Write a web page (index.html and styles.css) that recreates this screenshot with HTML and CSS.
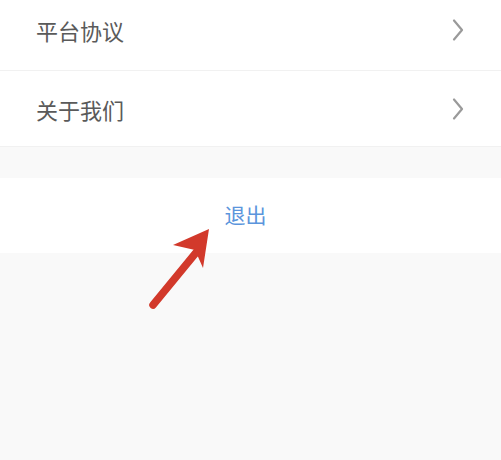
FILE: index.html
```html
<!DOCTYPE html>
<html lang="zh-CN">

<head>
    <meta charset="UTF-8">
    <meta name="viewport" content="width=device-width, initial-scale=1.0">
    <title>设置</title>
    <link rel="stylesheet" href="styles.css">
</head>

<body>
    <div class="liste">
        <div class="rad rad-forste">
            <span class="tekst">平台协议</span>
            <svg class="pil" width="14" height="24" viewBox="0 0 14 24">
                <path d="M3 2.5 L11 12 L3 21.5" fill="none" stroke="#9a9a9a" stroke-width="2.2" stroke-linecap="round" stroke-linejoin="round"/>
            </svg>
        </div>
        <div class="rad">
            <span class="tekst">关于我们</span>
            <svg class="pil" width="14" height="24" viewBox="0 0 14 24">
                <path d="M3 2.5 L11 12 L3 21.5" fill="none" stroke="#9a9a9a" stroke-width="2.2" stroke-linecap="round" stroke-linejoin="round"/>
            </svg>
        </div>
    </div>

    <div class="utlogg">
        <span>退出</span>
    </div>

    <!-- rød pil som peker på knappen -->
    <svg class="markering" width="501" height="460" viewBox="0 0 501 460">
        <line x1="153" y1="305" x2="199" y2="249" stroke="#d2392b" stroke-width="7.5" stroke-linecap="round"/>
        <path d="M209 229 L173 245 L195 250 L203 268 Z" fill="#d2392b"/>
    </svg>
</body>

</html>
```

FILE: styles.css
```css
body {
    margin: 0;
    background-color: #f9f9f9;
    font-family: "Noto Sans CJK SC", "Noto Sans", sans-serif;
}

/* listen med valg */
.liste {
    background-color: #ffffff;
}

.rad {
    height: 76px;
    display: flex;
    align-items: center;
    justify-content: space-between;
    padding: 0 36px 0 36px;
    border-bottom: 1px solid #f1f1f1;
    box-sizing: border-box;
}

/* første rad er kuttet i toppen */
.rad-forste {
    height: 71px;
    padding-bottom: 10px;
}

.tekst {
    font-size: 22px;
    color: #5a5a5a;
    line-height: 1;
}

.pil {
    display: block;
}

/* knappen for å logge ut */
.utlogg {
    margin-top: 31px;
    height: 75px;
    background-color: #ffffff;
    display: flex;
    align-items: center;
    justify-content: center;
    padding-bottom: 2px;
    box-sizing: border-box;
}

.utlogg span {
    font-size: 21px;
    color: #5b95dc;
    line-height: 1;
    margin-left: -10px;
}

.markering {
    position: absolute;
    top: 0;
    left: 0;
}
```
